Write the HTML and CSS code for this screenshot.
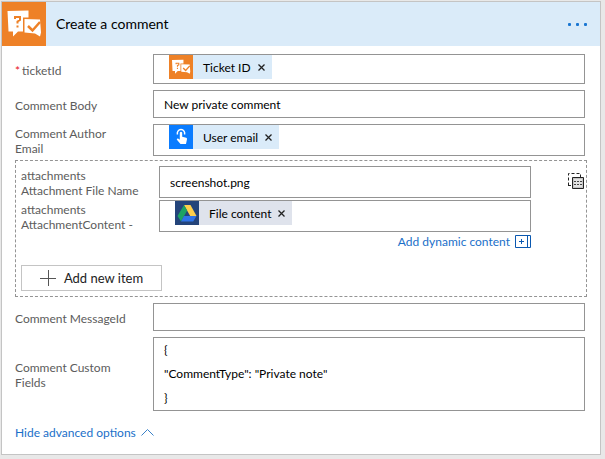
FILE: index.html
```html
<!DOCTYPE html>
<html lang="en">
<head>
<meta charset="utf-8">
<title>Create a comment</title>
<link rel="stylesheet" href="styles.css">
</head>
<body>
<svg class="defs" aria-hidden="true">
  <symbol id="comment-icon" viewBox="0 0 44 44">
    <path fill="#fff" d="M5.500 9L26.500 8.500V15.500H21V29.500H16L11 34.500V29.500H6.500z"/>
    <path fill="#fff" d="M22.500 17L38 17.500 39 30.500 38 34.500 33 31.500 22.500 30.500z"/>
    <path fill="none" stroke="#ee8127" stroke-width="2" d="M13 17v-2h5v3l-2.500 1.500v2M15.500 23.500v2"/>
    <path fill="none" stroke="#ee8127" stroke-width="2.500" d="M26 24l4.500 4.500L38 20"/>
  </symbol>
  <symbol id="close-icon" viewBox="0 0 7 7">
    <path fill="none" stroke="#222" stroke-width="1.300" d="M.5.5l6 6M6.500.5l-6 6"/>
  </symbol>
</svg>
<main class="card">
  <header class="header">
    <svg class="header-icon" aria-hidden="true"><use href="#comment-icon"/></svg>
    <h1 class="title">Create a comment</h1>
    <button class="more" type="button" aria-label="More options"><i></i><i></i><i></i></button>
  </header>
  <form class="fields">
    <div class="row row-token">
      <span class="label" id="ticket-label"><span class="required">*</span>ticketId</span>
      <div class="box" role="textbox" aria-labelledby="ticket-label">
        <span class="token"><svg class="token-icon orange" aria-hidden="true"><use href="#comment-icon"/></svg>Ticket ID
          <button class="remove" type="button" aria-label="Remove Ticket ID"><svg><use href="#close-icon"/></svg></button></span>
      </div>
    </div>
    <div class="row row-text">
      <label class="label" for="body">Comment Body</label>
      <input class="box" id="body" type="text" value="New private comment">
    </div>
    <div class="row row-token">
      <span class="label" id="author-label">Comment Author<br>Email</span>
      <div class="box" role="textbox" aria-labelledby="author-label">
        <span class="token"><svg class="token-icon blue" viewBox="0 0 24 24" aria-hidden="true">
          <path fill="none" stroke="#fff" stroke-width="1.500" d="M8.500 9.500a3.700 3.700 0 1 1 7 0"/>
          <path fill="#fff" d="M10.800 7.500q1.200-1.500 2.400 0v4.300l4 1q1 .4.800 1.500l-1 4.700h-5.500L7.700 14.500q.5-1.300 1.800-.7l1.300 1z"/>
        </svg>User email
          <button class="remove" type="button" aria-label="Remove User email"><svg><use href="#close-icon"/></svg></button></span>
      </div>
    </div>
    <fieldset class="group">
      <div class="group-fields">
        <div class="row row-text">
          <label class="label" for="file-name">attachments<br>Attachment File Name</label>
          <input class="box" id="file-name" type="text" value="screenshot.png">
        </div>
        <div class="row row-token">
          <span class="label" id="content-label">attachments<br>AttachmentContent -</span>
          <div class="box" role="textbox" aria-labelledby="content-label">
            <span class="token token-file"><svg class="token-icon navy" viewBox="0 0 24 24" aria-hidden="true">
              <path fill="#ffcf4c" d="M9 4h6.500l6 11h-6.300z"/>
              <path fill="#1da363" d="M9 4l3.200 5.500L6 20.500 2.500 15z"/>
              <path fill="#2f74e8" d="M9 15h12.500l-3.300 5.500H6z"/>
            </svg>File content
              <button class="remove" type="button" aria-label="Remove File content"><svg><use href="#close-icon"/></svg></button></span>
          </div>
        </div>
        <a class="dynamic" href="#">Add dynamic content
          <svg class="dynamic-icon" viewBox="0 0 16 13" aria-hidden="true"><path fill="none" stroke="#0a58b0" d="M.5.5h15v12H.5zM12.500.5v12M4 6.500h5M6.500 4v5"/></svg></a>
        <button class="add" type="button"><svg class="add-icon" viewBox="0 0 16 16" aria-hidden="true"><path stroke="#555" d="M0 8.500h16M8.500 0v16"/></svg>Add new item</button>
      </div>
      <button class="array-toggle" type="button" aria-label="Switch to input entire array">
        <svg viewBox="0 0 16 16"><path fill="none" stroke="#222" stroke-dasharray="3 2" d="M.5 12.500V.5h12v4M0 12.500h4"/><path fill="#c4c4c4" stroke="#222" d="M4.500 4.500h11v11h-11z"/><path fill="#fff" d="M6 6h8v8H6z" opacity=".5"/><path stroke="#444" stroke-dasharray="2 1" d="M6 8.500h8M6 11.500h8"/></svg>
      </button>
    </fieldset>
    <div class="row row-text">
      <label class="label" for="message">Comment MessageId</label>
      <input class="box" id="message" type="text">
    </div>
    <div class="row">
      <label class="label" for="custom">Comment Custom<br>Fields</label>
      <textarea class="box" id="custom" rows="3">{
"CommentType": "Private note"
}</textarea>
    </div>
    <a class="advanced" href="#">Hide advanced options
      <svg class="chevron" viewBox="0 0 13 7" aria-hidden="true"><path fill="none" stroke="#3b82c8" d="M.5 6.500l6-6 6 6"/></svg></a>
  </form>
</main>
</body>
</html>
```
FILE: styles.css
```css
* {
  box-sizing: border-box;
}

body {
  margin: 0;
  padding: 1px 4px 4px 1px;
  background: #e8e8e8;
  color: #000;
  font: 12px/15px Lato, "Open Sans", sans-serif;
}

button,
input,
textarea {
  font: inherit;
  color: inherit;
}

button {
  padding: 0;
  border: 0;
  background: none;
}

svg {
  display: block;
  flex: none;
}

.defs {
  position: absolute;
  width: 0;
  height: 0;
}

.card {
  border: 1px solid #c4c4c4;
  background: #fff;
}

.header {
  display: flex;
  align-items: center;
  height: 44px;
  padding-right: 13px;
  background: #daebf9;
}

.header-icon {
  width: 44px;
  height: 44px;
  background: #ee8127;
}

.title {
  flex: 1;
  margin: 0 0 0 10px;
  font-size: 14px;
  line-height: 20px;
  font-weight: 400;
}

.more {
  display: flex;
  gap: 5px;
}

.more i {
  width: 3px;
  height: 3px;
  border-radius: 1px;
  background: #1976d2;
}

.fields {
  display: flex;
  flex-direction: column;
  gap: 6px;
  padding: 8px 15px 14px 13px;
}

.row {
  display: grid;
  grid-template-columns: 138px 1fr;
  align-items: center;
}

.row-text {
  height: 28px;
}

.row-token {
  height: 30px;
}

.label {
  padding-top: 2px;
  color: #5c5c5c;
}

.required {
  margin-right: 2px;
  color: #e81123;
}

.box {
  width: 100%;
  height: 100%;
  margin: 0;
  padding: 0 10px;
  border: 1px solid #949494;
  border-radius: 0;
  background: #fff;
}

div.box {
  padding-left: 15px;
}

textarea.box {
  display: block;
  padding: 0 10px;
  line-height: 24px;
  resize: none;
}

.token {
  display: flex;
  width: max-content;
  align-items: center;
  height: 24px;
  padding-right: 4px;
  background: #daebf9;
}

.token-file {
  background: #dfe3ec;
}

.token-icon {
  width: 24px;
  height: 24px;
  margin-right: 10px;
}

.orange {
  background: #ee8127;
}

.blue {
  background: #0a7cff;
}

.navy {
  background: #24447a;
}

.remove {
  margin-left: 4px;
  padding: 3px;
}

.remove svg {
  width: 7px;
  height: 7px;
}

.group {
  display: flex;
  justify-content: space-between;
  margin: 0 -2px 0 0;
  padding: 5px 2px 5px 5px;
  min-width: 0;
  border: 1px dashed #949494;
}

.group-fields {
  flex: 1;
  display: flex;
  flex-direction: column;
  gap: 6px;
  margin-right: 37px;
}

.dynamic,
.advanced {
  display: flex;
  align-items: center;
  color: #1a6fc9;
  text-decoration: none;
}

.dynamic {
  align-self: flex-end;
  gap: 5px;
  margin: -2px 0 10px;
}

.dynamic-icon {
  width: 16px;
  height: 13px;
}

.add {
  display: flex;
  align-items: center;
  justify-content: center;
  gap: 8px;
  align-self: flex-start;
  width: 141px;
  height: 26px;
  border: 1px solid #c4c4c4;
  color: #222;
  font-size: 13px;
}

.add-icon {
  width: 16px;
  height: 16px;
}

.array-toggle {
  align-self: flex-start;
  margin-top: 7px;
}

.array-toggle svg {
  width: 16px;
  height: 16px;
}

.advanced {
  align-self: flex-start;
  gap: 5px;
  margin-top: 8px;
}

.chevron {
  width: 13px;
  height: 7px;
}
```
